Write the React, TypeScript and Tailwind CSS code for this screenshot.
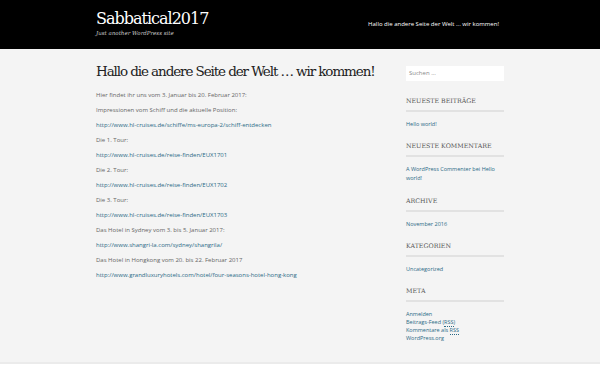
const paragraphs: { text: string; link?: boolean }[] = [
  { text: 'Hier findet ihr uns vom 3. Januar bis 20. Februar 2017:' },
  { text: 'Impressionen vom Schiff und die aktuelle Position:' },
  { text: 'http://www.hl-cruises.de/schiffe/ms-europa-2/schiff-entdecken', link: true },
  { text: 'Die 1. Tour:' },
  { text: 'http://www.hl-cruises.de/reise-finden/EUX1701', link: true },
  { text: 'Die 2. Tour:' },
  { text: 'http://www.hl-cruises.de/reise-finden/EUX1702', link: true },
  { text: 'Die 3. Tour:' },
  { text: 'http://www.hl-cruises.de/reise-finden/EUX1703', link: true },
  { text: 'Das Hotel in Sydney vom 3. bis 5. Januar 2017:' },
  { text: 'http://www.shangri-la.com/sydney/shangrila/', link: true },
  { text: 'Das Hotel in Hongkong vom 20. bis 22. Februar 2017' },
  { text: 'http://www.grandluxuryhotels.com/hotel/four-seasons-hotel-hong-kong', link: true },
];

function WidgetTitle({ children }: { children: string }) {
  return (
    <div>
      <h3 className="font-['DejaVu_Serif',serif] text-[6.3px] uppercase leading-[7px] text-[#555]">
        {children}
      </h3>
      <div className="mt-[6px] h-[2px] bg-[#e2e2e2]" />
    </div>
  );
}

export default function App() {
  return (
    <div className="min-h-[375px] bg-white font-['Open_Sans',sans-serif]">
      <header className="h-[49px] bg-black">
        <div className="mx-auto flex w-[408px] items-start justify-between">
          <div className="pt-[9px]">
            <h1 className="font-['DejaVu_Serif',serif] text-[16px] leading-[20px] tracking-[-1px] text-white">
              Sabbatical2017
            </h1>
            <p className="font-['DejaVu_Serif',serif] text-[5.5px] italic leading-[8px] text-[#cccccc]">
              Just another WordPress site
            </p>
          </div>
          <p className="pr-[5px] pt-[20px] text-[6px] text-white">Hallo die andere Seite der Welt ... wir kommen!</p>
        </div>
      </header>

      <main className="h-[315px] border-b-[2px] border-[#ebebeb] bg-[#f4f4f4]">
        <div className="mx-auto flex w-[408px] justify-between pt-[14px]">
          <article className="w-[290px]">
            <h2 className="whitespace-nowrap font-['DejaVu_Serif',serif] text-[13.5px] leading-[16px] tracking-[-1.1px] text-[#222]">
              Hallo die andere Seite der Welt … wir kommen!
            </h2>
            <div className="mt-[12px] flex flex-col gap-[7px]">
              {paragraphs.map((p, i) => (
                <p
                  key={i}
                  className={`text-[6px] leading-[8px] ${p.link ? 'text-[#2b6a86]' : 'text-[#666]'}`}
                >
                  {p.text}
                </p>
              ))}
            </div>
          </article>

          <aside className="w-[98px] pt-[3px]">
            <div className="flex h-[15px] items-center bg-white px-[3px] text-[6px] text-[#888]">Suchen …</div>

            <div className="mt-[16px]">
              <WidgetTitle>Neueste Beiträge</WidgetTitle>
              <p className="mt-[8px] text-[5.5px] leading-[9px] text-[#2b6a86]">Hello world!</p>
            </div>

            <div className="mt-[13px]">
              <WidgetTitle>Neueste Kommentare</WidgetTitle>
              <p className="mt-[8px] text-[5.5px] leading-[9px] text-[#2b6a86]">
                A WordPress Commenter bei Hello world!
              </p>
            </div>

            <div className="mt-[14px]">
              <WidgetTitle>Archive</WidgetTitle>
              <p className="mt-[8px] text-[5.5px] leading-[9px] text-[#2b6a86]">November 2016</p>
            </div>

            <div className="mt-[13px]">
              <WidgetTitle>Kategorien</WidgetTitle>
              <p className="mt-[8px] text-[5.5px] leading-[9px] text-[#2b6a86]">Uncategorized</p>
            </div>

            <div className="mt-[13px]">
              <WidgetTitle>Meta</WidgetTitle>
              <ul className="mt-[8px] text-[5.5px] leading-[8px] text-[#2b6a86]">
                <li>Anmelden</li>
                <li>
                  Beitrags-Feed (<span className="border-b border-dotted border-[#2b6a86]">RSS</span>)
                </li>
                <li>
                  Kommentare als <span className="border-b border-dotted border-[#2b6a86]">RSS</span>
                </li>
                <li>WordPress.org</li>
              </ul>
            </div>
          </aside>
        </div>
      </main>
    </div>
  );
}
